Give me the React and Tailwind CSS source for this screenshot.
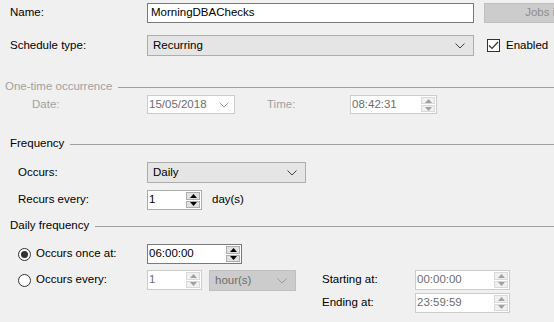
const SpinArrows = ({ disabled = false }) => {
  const fill = disabled ? '#a0a0a0' : '#000000'
  const border = disabled ? 'border-[#d9d9d9]' : 'border-[#adadad]'
  const bg = disabled ? 'bg-[#f0f0f0]' : 'bg-[#e1e1e1]'
  return (
    <div className="flex flex-col h-full w-[15px] py-[1px] pr-[1px] gap-[1px]">
      <div className={`flex-1 flex items-center justify-center border ${border} ${bg}`}>
        <svg width="7" height="4" viewBox="0 0 7 4"><path d="M0 4 L3.5 0 L7 4 Z" fill={fill} /></svg>
      </div>
      <div className={`flex-1 flex items-center justify-center border ${border} ${bg}`}>
        <svg width="7" height="4" viewBox="0 0 7 4"><path d="M0 0 L3.5 4 L7 0 Z" fill={fill} /></svg>
      </div>
    </div>
  )
}

const Chevron = ({ color = '#404040' }) => (
  <svg width="10" height="6" viewBox="0 0 10 6" className="shrink-0">
    <path d="M0.5 0.5 L5 5 L9.5 0.5" fill="none" stroke={color} strokeWidth="1" />
  </svg>
)

const SpinBox = ({ value, width, disabled = false, dark = false }) => {
  const border = dark ? 'border-[#7a7a7a]' : disabled ? 'border-[#cccccc]' : 'border-[#adadad]'
  return (
    <div className={`flex items-center h-[20px] border ${border} bg-white ${width}`}>
      <span className={`flex-1 pl-[1px] ${disabled ? 'text-[#6d6d6d]' : 'text-black'}`}>{value}</span>
      <SpinArrows disabled={disabled} />
    </div>
  )
}

const Combo = ({ value, width, disabled = false }) => (
  <div
    className={`flex items-center h-[21px] border pl-[5px] pr-[8px] ${width} ${
      disabled ? 'bg-[#cccccc] border-[#bfbfbf] text-[#6d6d6d]' : 'bg-[#e5e5e5] border-[#adadad] text-black'
    }`}
  >
    <span className="flex-1">{value}</span>
    <Chevron color={disabled ? '#9a9a9a' : '#404040'} />
  </div>
)

const GroupHeader = ({ title, disabled = false }) => (
  <div className="flex items-center h-[14px]">
    <span className={disabled ? 'text-[#a0a0a0]' : 'text-black'}>{title}</span>
    <div className="flex-1 h-px bg-[#a0a0a0] ml-[6px]" />
  </div>
)

const Radio = ({ checked }) => (
  <div className="w-[13px] h-[13px] rounded-full border border-[#333333] bg-white flex items-center justify-center">
    {checked && <div className="w-[7px] h-[7px] rounded-full bg-[#333333]" />}
  </div>
)

export default function App() {
  return (
    <div
      className="w-[554px] h-[322px] overflow-hidden bg-[#f0f0f0] text-[11.5px] leading-none text-black relative"
      style={{ fontFamily: '"Liberation Sans", Arial, sans-serif' }}
    >
      {/* Name */}
      <div className="flex items-center mt-[3px] h-[20px]">
        <span className="w-[147px] pl-[10px] shrink-0">Name:</span>
        <div className="w-[327px] shrink-0 h-[20px] border border-[#7a7a7a] bg-white flex items-center pl-[3px]">
          MorningDBAChecks
        </div>
        <div className="ml-[10px] w-[170px] shrink-0 h-[20px] bg-[#cccccc] border border-[#bfbfbf] flex items-center justify-center whitespace-nowrap text-[#8c8c8c]">
          Jobs in Schedule
        </div>
      </div>

      {/* Schedule type */}
      <div className="flex items-center mt-[12px] h-[21px]">
        <span className="w-[147px] pl-[10px]">Schedule type:</span>
        <Combo value="Recurring" width="w-[327px]" />
        <div className="ml-[13px] w-[13px] h-[13px] border border-[#333333] bg-white flex items-center justify-center">
          <svg width="11" height="9" viewBox="0 0 11 9">
            <path d="M1 4.5 L4 7.5 L10 1" fill="none" stroke="#333333" strokeWidth="1.2" />
          </svg>
        </div>
        <span className="ml-[6px]">Enabled</span>
      </div>

      {/* One-time occurrence */}
      <div className="mt-[24px] pl-[5px]">
        <GroupHeader title="One-time occurrence" disabled />
      </div>
      <div className="flex items-center mt-[1px] h-[19px] text-[#a0a0a0]">
        <span className="w-[147px] pl-[32px]">Date:</span>
        <div className="w-[88px] h-[19px] border border-[#cccccc] bg-white flex items-center pl-[1px] pr-[5px] text-[#6d6d6d]">
          <span className="flex-1">15/05/2018</span>
          <Chevron color="#a0a0a0" />
        </div>
        <span className="ml-[32px] w-[83px]">Time:</span>
        <div className="w-[87px] h-[19px] border border-[#cccccc] bg-white flex items-center text-[#6d6d6d]">
          <span className="flex-1 pl-[1px]">08:42:31</span>
          <SpinArrows disabled />
        </div>
      </div>

      {/* Frequency */}
      <div className="mt-[23px] pl-[10px]">
        <GroupHeader title="Frequency" />
      </div>
      <div className="flex items-center mt-[11px] h-[21px]">
        <span className="w-[147px] pl-[18px]">Occurs:</span>
        <Combo value="Daily" width="w-[159px]" />
      </div>
      <div className="flex items-center mt-[7px] h-[20px]">
        <span className="w-[147px] pl-[18px]">Recurs every:</span>
        <SpinBox value="1" width="w-[55px]" />
        <span className="ml-[10px]">day(s)</span>
      </div>

      {/* Daily frequency */}
      <div className="mt-[9px] pl-[10px]">
        <GroupHeader title="Daily frequency" />
      </div>
      <div className="flex items-center mt-[11px] h-[20px]">
        <div className="w-[147px] pl-[18px] flex items-center">
          <Radio checked />
          <span className="ml-[5px]">Occurs once at:</span>
        </div>
        <SpinBox value="06:00:00" width="w-[95px]" dark />
      </div>
      <div className="flex items-start mt-[6px]">
        <div className="w-[147px] pl-[18px] flex items-center h-[20px]">
          <Radio />
          <span className="ml-[5px]">Occurs every:</span>
        </div>
        <SpinBox value="1" width="w-[55px]" disabled />
        <div className="ml-[7px]">
          <Combo value="hour(s)" width="w-[87px]" disabled />
        </div>
        <div className="ml-[26px] flex flex-col gap-[3px]">
          <div className="flex items-center">
            <span className="w-[93px]">Starting at:</span>
            <SpinBox value="00:00:00" width="w-[95px]" disabled />
          </div>
          <div className="flex items-center">
            <span className="w-[93px]">Ending at:</span>
            <SpinBox value="23:59:59" width="w-[95px]" disabled />
          </div>
        </div>
      </div>
    </div>
  )
}
